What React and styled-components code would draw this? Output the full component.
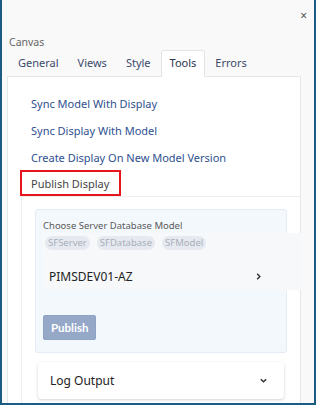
import React from "react";
import styled, { createGlobalStyle } from "styled-components";

const Global = createGlobalStyle`
  html, body { margin: 0; padding: 0; background: #f9f9f9; }
  body { font-family: "Noto Sans", "Open Sans", sans-serif; }
`;

const Frame = styled.div`
  width: 316px;
  height: 405px;
  box-sizing: border-box;
  border: 2px solid #1b5c82;
  border-top: none;
  background: #f9f9f9;
  padding: 0 13px 0 5px;
  display: flex;
  flex-direction: column;
  overflow: hidden;
`;

const CloseRow = styled.div`
  display: flex;
  justify-content: flex-end;
  height: 35px;
  padding-top: 7px;
  box-sizing: border-box;
  margin-right: -6px;
  font-size: 12px;
  color: #555;
`;

const Title = styled.div`
  font-size: 10.5px;
  color: #666;
  margin: 0 0 0 2px;
  line-height: 14px;
`;

const Tabs = styled.div`
  display: flex;
  height: 26px;
  margin-top: 1px;
  padding-left: 2px;
`;

const Tab = styled.div`
  font-size: 11px;
  color: ${(p) => (p.$active ? "#2a3550" : "#3b4a6a")};
  padding: 4px 8px 0;
  box-sizing: border-box;
  height: 27px;
  background: ${(p) => (p.$active ? "#fff" : "transparent")};
  border: 1px solid ${(p) => (p.$active ? "#e4e4e4" : "transparent")};
  border-bottom: none;
  border-radius: 3px 3px 0 0;
  margin-right: 1px;
  position: relative;
  z-index: 1;
`;

const Panel = styled.div`
  flex: 1;
  background: #fff;
  border: 1px solid #e6e6e6;
  border-bottom: none;
  padding: 18px 0 0 13px;
  display: flex;
  flex-direction: column;
  min-height: 0;
`;

const LinkList = styled.div`
  display: flex;
  flex-direction: column;
  gap: 10px;
  padding-left: 10px;
`;

const ToolLink = styled.a`
  font-size: 11px;
  line-height: 17px;
  color: #2e4f8f;
  text-decoration: none;
`;

const Highlight = styled.div`
  align-self: flex-start;
  margin-left: -1px;
  margin-top: 4px;
  padding: 3px 10px 2px 9px;
  border: 2px solid #e5141d;
  font-size: 11px;
  line-height: 17px;
  color: #444;
`;

const Section = styled.div`
  border-top: 1px solid #eeeeee;
  border-left: 1px solid #eeeeee;
  padding: 12px 0 0 13px;
  flex: 1;
  display: flex;
  flex-direction: column;
  gap: 9px;
`;

const Card = styled.div`
  width: 252px;
  height: 144px;
  box-sizing: border-box;
  background: #f3f8fd;
  border: 1px solid #e6ecf3;
  border-radius: 3px;
  padding: 9px 0 0 7px;
`;

const Label = styled.div`
  font-size: 9.5px;
  color: #5a5a5a;
  line-height: 14px;
`;

const Row = styled.div`
  margin-right: -15px;
  margin-left: -1px;
  background: #f6f8fa;
  padding: 3px 0 0 3px;
  height: 57px;
  box-sizing: border-box;
`;

const Chips = styled.div`
  display: flex;
  gap: 7px;
`;

const Chip = styled.span`
  font-size: 9.5px;
  color: #a8afbb;
  background: #e6eaf0;
  border-radius: 8px;
  padding: 0 3px;
  line-height: 14px;
`;

const Item = styled.div`
  display: flex;
  align-items: center;
  justify-content: space-between;
  padding: 18px 38px 0 4px;
  font-size: 12px;
  color: #222;
`;

const Button = styled.button`
  margin-top: 25px;
  background: #95a8c8;
  color: #fff;
  border: 1px solid #8ea2c3;
  border-radius: 2px;
  font-family: "Lato", sans-serif;
  font-weight: 700;
  font-size: 11.5px;
  padding: 0 7px;
  height: 25px;
`;

const Accordion = styled.div`
  width: 246px;
  margin-left: 3px;
  box-sizing: border-box;
  background: #fff;
  border-radius: 4px;
  box-shadow: 0 1px 3px rgba(0, 0, 0, 0.18);
  display: flex;
  align-items: center;
  justify-content: space-between;
  height: 37px;
  padding: 0 16px 0 12px;
  font-size: 12px;
  color: #222;
`;

const Chevron = ({ dir }) => (
  <svg width="9" height="9" viewBox="0 0 10 10" fill="none" stroke="#333" strokeWidth="1.6">
    {dir === "down" ? <path d="M2 3.5 L5 6.5 L8 3.5" /> : <path d="M3.5 2 L6.5 5 L3.5 8" />}
  </svg>
);

export default function App() {
  const tabs = ["General", "Views", "Style", "Tools", "Errors"];
  return (
    <>
      <Global />
      <Frame>
        <CloseRow>×</CloseRow>
        <Title>Canvas</Title>
        <Tabs>
          {tabs.map((t) => (
            <Tab key={t} $active={t === "Tools"}>{t}</Tab>
          ))}
        </Tabs>
        <Panel>
          <LinkList>
            <ToolLink>Sync Model With Display</ToolLink>
            <ToolLink>Sync Display With Model</ToolLink>
            <ToolLink>Create Display On New Model Version</ToolLink>
          </LinkList>
          <Highlight>Publish Display</Highlight>
          <Section>
            <Card>
              <Label>Choose Server Database Model</Label>
              <Row>
                <Chips>
                  <Chip>SFServer</Chip>
                  <Chip>SFDatabase</Chip>
                  <Chip>SFModel</Chip>
                </Chips>
                <Item>
                  PIMSDEV01-AZ
                  <Chevron dir="right" />
                </Item>
              </Row>
              <Button>Publish</Button>
            </Card>
            <Accordion>
              Log Output
              <Chevron dir="down" />
            </Accordion>
          </Section>
        </Panel>
      </Frame>
    </>
  );
}
